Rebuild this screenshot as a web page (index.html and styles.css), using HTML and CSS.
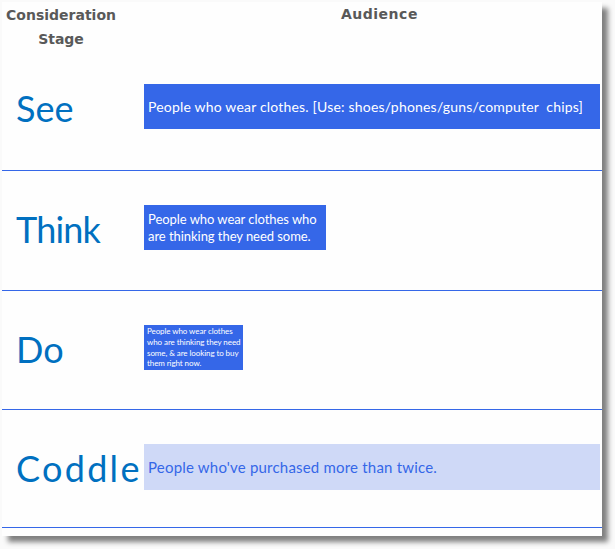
FILE: index.html
```html
<!DOCTYPE html>
<html lang="en">
<head>
<meta charset="utf-8">
<title>Consideration Stage and Audience</title>
<link rel="stylesheet" href="styles.css">
</head>
<body>
<main class="card">
  <header class="head">
    <div class="head-stage">Consideration<br>Stage</div>
    <div class="head-audience">Audience</div>
  </header>
  <section class="row row-see">
    <h2 class="stage">See</h2>
    <p class="box box-full">People who wear clothes. [Use: shoes/phones/guns/computer&nbsp; chips]</p>
  </section>
  <section class="row row-think">
    <h2 class="stage stage-narrow">Think</h2>
    <p class="box box-mid"><span>People who wear clothes who<br>are thinking they need some.</span></p>
  </section>
  <section class="row row-do">
    <h2 class="stage">Do</h2>
    <p class="box box-small"><span>People who wear clothes<br>who are thinking they need<br>some, &amp; are looking to buy<br>them right now.</span></p>
  </section>
  <section class="row row-coddle">
    <h2 class="stage stage-wide">Coddle</h2>
    <p class="box box-full box-pale">People who've purchased more than twice.</p>
  </section>
</main>
</body>
</html>
```
FILE: styles.css
```css
html, body { margin: 0; padding: 0; }
body {
  background: #fafafa;
  width: 615px;
  height: 549px;
  overflow: hidden;
  font-family: "Lato", "Liberation Sans", sans-serif;
}
.card {
  margin: 2px 0 0 2px;
  width: 600px;
  height: 534px;
  background: #fefefe;
  box-shadow: 6px 6px 5px #808080;
}
.head {
  display: flex;
  height: 48px;
  color: #595959;
  font-family: "DejaVu Sans", sans-serif;
  font-weight: 700;
  font-size: 14px;
  line-height: 24px;
}
.head-stage { width: 118px; text-align: center; margin-top: 1px; }
.head-audience { margin-left: 221px; letter-spacing: 0.5px; }
.row {
  display: flex;
  align-items: flex-start;
  box-sizing: border-box;
  padding: 34px 0 0 14px;
  border-bottom: 1px solid #3567e8;
}
.row-see { height: 121px; }
.row-think { height: 120px; }
.row-do { height: 119px; }
.row-coddle { height: 118px; }
.stage {
  width: 128px;
  margin: 0;
  color: #0070c0;
  font-size: 36px;
  font-weight: 400;
  line-height: 48px;
}
.stage-wide { letter-spacing: 2.3px; }
.stage-narrow { letter-spacing: -0.8px; }
.box {
  margin: 0;
  box-sizing: border-box;
  height: 45px;
  padding: 0 4px;
  background: #3567e8;
  color: #fff;
  font-size: 14px;
  font-weight: 400;
  letter-spacing: 0.19px;
  line-height: 17px;
  display: flex;
  align-items: center;
}
.box-full { width: 456px; }
.box-mid {
  width: 182px;
  font-size: 13px;
  letter-spacing: -0.05px;
  white-space: nowrap;
}
.box-small {
  width: 99px;
  padding: 0 3px;
  font-size: 8px;
  letter-spacing: -0.08px;
  line-height: 10.7px;
  white-space: nowrap;
}
.box-pale {
  height: 46px;
  background: #cfd9f7;
  color: #3567e8;
  font-size: 15px;
  letter-spacing: 0.2px;
}
```
